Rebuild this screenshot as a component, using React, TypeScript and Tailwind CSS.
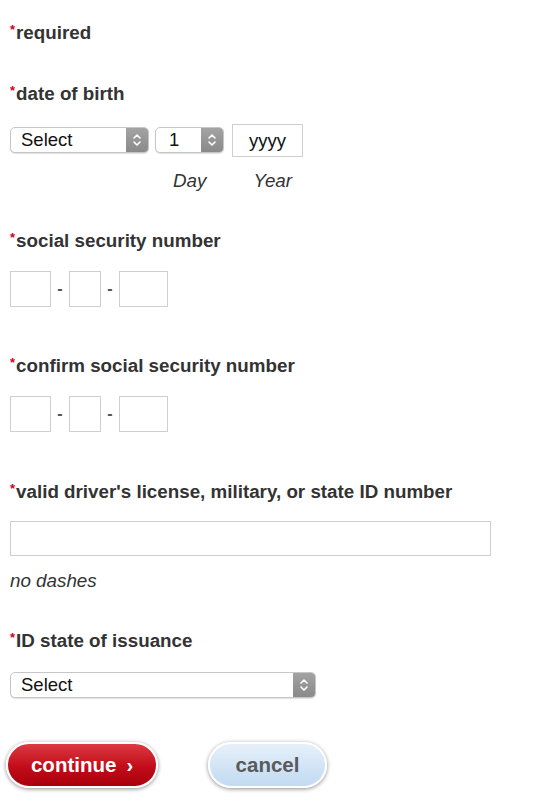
import React from 'react';

const Star = () => (
  <span className="inline-block align-top text-[13px] leading-none text-[#d0011b] font-bold mt-[1px] mr-[1px]">*</span>
);

function Label({ children, className = '' }: { children: React.ReactNode; className?: string }) {
  return (
    <div className={`text-[18.8px] leading-[22px] font-bold text-[#333] ${className}`}>
      <Star />
      {children}
    </div>
  );
}

const Arrows = () => (
  <svg width="10" height="16" viewBox="0 0 10 16" fill="none" stroke="white" strokeWidth="1.6" strokeLinecap="round" strokeLinejoin="round">
    <path d="M2 6 L5 3 L8 6" />
    <path d="M2 10 L5 13 L8 10" />
  </svg>
);

function Select({ value, width, textPad = 'pl-[10px]' }: { value: string; width: string; textPad?: string }) {
  return (
    <div
      className={`flex h-[26px] ${width} rounded-[5px] border border-[#c6c6c6] bg-white shadow-[0_1px_1px_rgba(0,0,0,0.12)] overflow-hidden`}
    >
      <div className={`flex-1 flex items-center ${textPad} text-[18.5px] text-[#111]`}>{value}</div>
      <div className="w-[22px] flex items-center justify-center bg-[linear-gradient(to_bottom,#a3a3a3,#8a8a8a)]">
        <Arrows />
      </div>
    </div>
  );
}

const Box = ({ w }: { w: string }) => (
  <div className={`${w} h-[36px] border border-[#cfcfcf] bg-white`} />
);

const Dash = () => <span className="w-[18px] text-center text-[16px] font-bold text-[#555]">-</span>;

function SsnRow() {
  return (
    <div className="flex items-center">
      <Box w="w-[41px]" />
      <Dash />
      <Box w="w-[32px]" />
      <Dash />
      <Box w="w-[49px]" />
    </div>
  );
}

export default function App() {
  return (
    <div className="min-h-screen bg-white pl-[10px] font-['Liberation_Sans',Arial,sans-serif] text-[#333]">
      <Label className="pt-[22px]">required</Label>

      <Label className="mt-[39px]">date of birth</Label>
      <div className="mt-[19px] flex items-start">
        <div className="mt-[3px]">
          <Select value="Select" width="w-[139px]" />
        </div>
        <div className="mt-[3px] ml-[6px]">
          <Select value="1" width="w-[69px]" textPad="pl-[13px]" />
        </div>
        <div className="ml-[8px] w-[71px] h-[33px] border border-[#cfcfcf] flex items-center justify-center text-[18.5px] text-[#111]">
          yyyy
        </div>
      </div>
      <div className="mt-[13px] flex text-[18.8px] leading-[22px] italic text-[#333]">
        <span className="ml-[163px]">Day</span>
        <span className="ml-[47px]">Year</span>
      </div>

      <Label className="mt-[38px]">social security number</Label>
      <div className="mt-[19px]">
        <SsnRow />
      </div>

      <Label className="mt-[48px]">confirm social security number</Label>
      <div className="mt-[19px]">
        <SsnRow />
      </div>

      <Label className="mt-[49px]">valid driver's license, military, or state ID number</Label>
      <div className="mt-[18px] w-[481px] h-[35px] border border-[#cfcfcf] bg-white" />
      <div className="mt-[14px] text-[18.8px] leading-[22px] italic text-[#333]">no dashes</div>

      <Label className="mt-[38px]">ID state of issuance</Label>
      <div className="mt-[20px]">
        <Select value="Select" width="w-[306px]" />
      </div>

      <div className="mt-[44px] flex items-center pb-[15px]">
        <button className="-ml-[4px] w-[152px] h-[46px] rounded-full border-2 border-white shadow-[0_1px_4px_rgba(0,0,0,0.45)] bg-[linear-gradient(to_bottom,#dc3a43,#c10c19_55%,#a9000c)] text-white text-[20.5px] font-bold flex items-center justify-center gap-[10px]">
          <span>continue</span>
          <span className="text-[20px]">›</span>
        </button>
        <button className="ml-[50px] w-[119px] h-[46px] rounded-full border-2 border-white shadow-[0_1px_4px_rgba(0,0,0,0.45)] bg-[linear-gradient(to_bottom,#e6f0fa,#d3e5f6_50%,#c2daf1)] text-[#5a5a5a] text-[20.5px] font-bold flex items-center justify-center">
          cancel
        </button>
      </div>
    </div>
  );
}
